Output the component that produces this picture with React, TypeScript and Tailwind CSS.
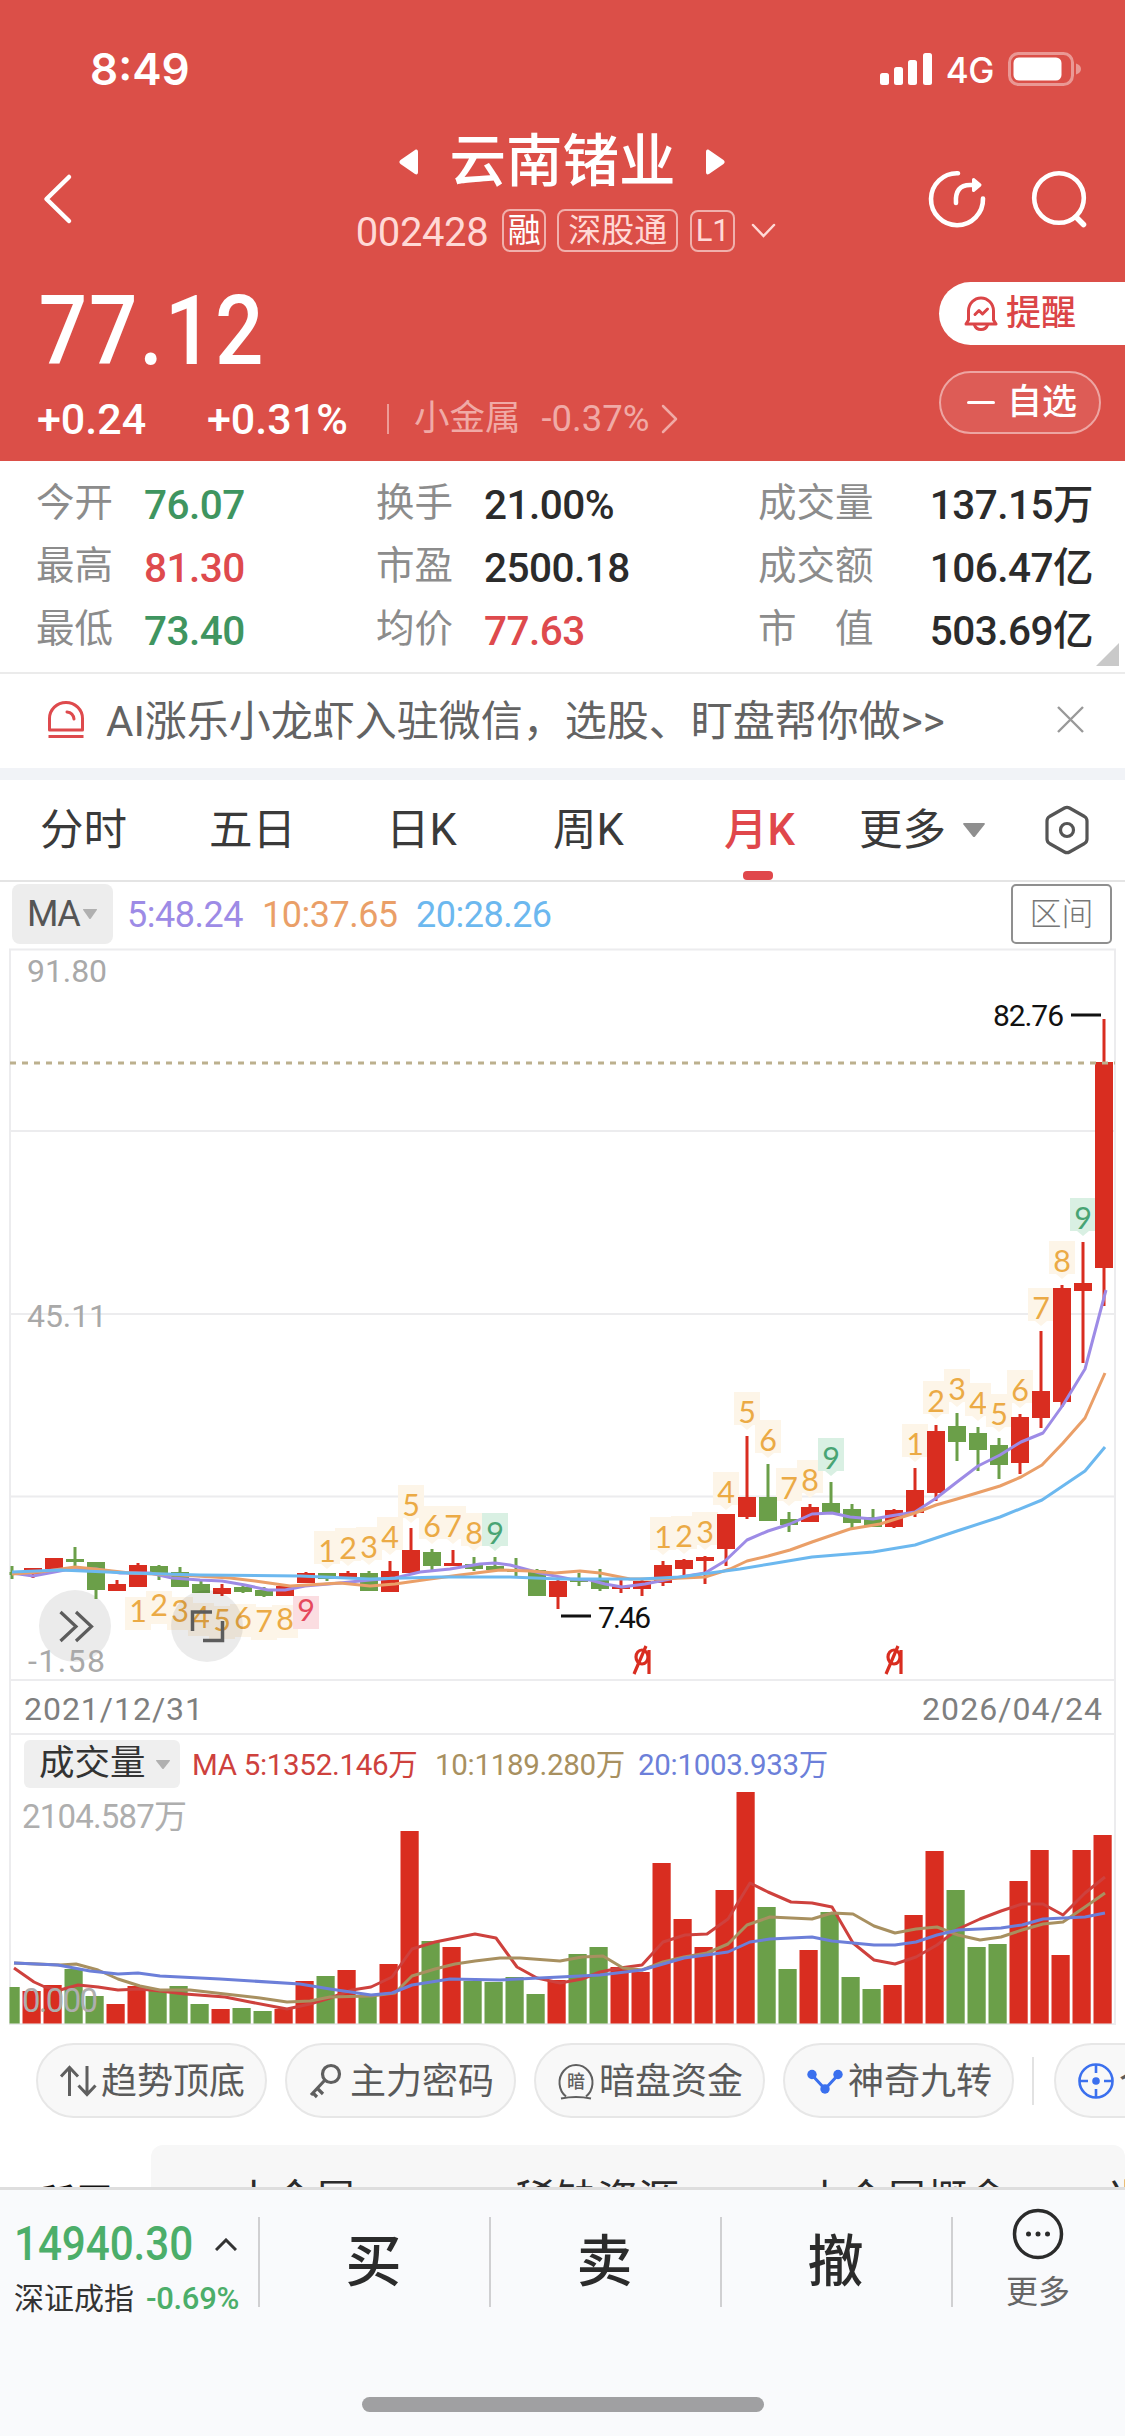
import React from 'react';
import clsx from 'clsx';

const RED = '#d92d20';
const GREEN = '#6b9f49';

// First candle / volume bar centre and distance between neighbours
const CANDLE_X0 = 12;
const VOLUME_X0 = 10.6;
const STEP = 21;

type Direction = 'r' | 'g';

// direction, high, body top, body bottom, low
const candles: [Direction, number, number, number, number][] = [
  ['g', 1566, 1572, 1575, 1579],
  ['r', 1568, 1568, 1574, 1578],
  ['r', 1558, 1558, 1569, 1569],
  ['g', 1547, 1559, 1562, 1566],
  ['g', 1562, 1562, 1590, 1599],
  ['r', 1580, 1584, 1591, 1591],
  ['r', 1563, 1565, 1587, 1587],
  ['g', 1565, 1566, 1575, 1580],
  ['g', 1567, 1572, 1587, 1587],
  ['g', 1581, 1584, 1593, 1593],
  ['r', 1584, 1588, 1594, 1596],
  ['g', 1586, 1587, 1592, 1593],
  ['g', 1587, 1590, 1596, 1597],
  ['r', 1586, 1586, 1596, 1596],
  ['r', 1572, 1573, 1583, 1583],
  ['g', 1573, 1573, 1579, 1581],
  ['r', 1571, 1573, 1578, 1578],
  ['g', 1571, 1573, 1591, 1591],
  ['r', 1561, 1571, 1592, 1592],
  ['r', 1528, 1550, 1573, 1573],
  ['g', 1549, 1552, 1566, 1570],
  ['r', 1550, 1563, 1566, 1566],
  ['g', 1557, 1564, 1569, 1571],
  ['g', 1557, 1566, 1570, 1570],
  ['g', 1558, 1570, 1572, 1576],
  ['g', 1569, 1570, 1596, 1596],
  ['r', 1580, 1581, 1597, 1609],
  ['g', 1573, 1579, 1582, 1586],
  ['g', 1569, 1579, 1589, 1591],
  ['r', 1579, 1586, 1589, 1593],
  ['r', 1580, 1581, 1589, 1596],
  ['r', 1561, 1565, 1583, 1586],
  ['r', 1559, 1560, 1569, 1575],
  ['r', 1556, 1557, 1561, 1584],
  ['r', 1514, 1514, 1549, 1566],
  ['r', 1436, 1497, 1517, 1519],
  ['g', 1464, 1497, 1521, 1521],
  ['g', 1512, 1519, 1525, 1532],
  ['r', 1504, 1507, 1522, 1522],
  ['g', 1482, 1503, 1513, 1513],
  ['g', 1504, 1509, 1523, 1528],
  ['g', 1509, 1517, 1527, 1527],
  ['r', 1509, 1510, 1527, 1528],
  ['r', 1468, 1490, 1513, 1517],
  ['r', 1425, 1431, 1493, 1501],
  ['g', 1413, 1426, 1442, 1461],
  ['g', 1427, 1433, 1450, 1471],
  ['g', 1438, 1445, 1465, 1479],
  ['r', 1414, 1417, 1463, 1474],
  ['r', 1331, 1391, 1418, 1428],
  ['r', 1285, 1288, 1402, 1407],
  ['r', 1242, 1283, 1291, 1363],
  ['r', 1019, 1062, 1268, 1306],
];

// candle index, count, text baseline
const upperMarks: [number, number, number][] = [
  [15, 1, 1562], [16, 2, 1559], [17, 3, 1558], [18, 4, 1548], [19, 5, 1516], [20, 6, 1537], [21, 7, 1537], [22, 8, 1544], [23, 9, 1544],
  [31, 1, 1548], [32, 2, 1547], [33, 3, 1543], [34, 4, 1503], [35, 5, 1423], [36, 6, 1451], [37, 7, 1499], [38, 8, 1491], [39, 9, 1469],
  [43, 1, 1455], [44, 2, 1412], [45, 3, 1400], [46, 4, 1414], [47, 5, 1425], [48, 6, 1401], [49, 7, 1319], [50, 8, 1272], [51, 9, 1229],
];

const lowerMarks: [number, number, number][] = [
  [6, 1, 1622], [7, 2, 1616], [8, 3, 1622], [9, 4, 1628], [10, 5, 1631], [11, 6, 1629], [12, 7, 1632], [13, 8, 1630], [14, 9, 1621],
];

const priceAverages = [
  {
    color: '#9d8be6',
    points: '12,1573 33,1576 65,1570 96,1569 120,1573 150,1573 172,1578 200,1580 222,1581 245,1585 268,1590 285,1590 305,1586 340,1583 370,1580 395,1578 420,1572 450,1569 480,1564 495,1563 510,1565 540,1573 570,1579 590,1580 605,1584 622,1587 645,1584 680,1577 705,1573 725,1561 747,1540 768,1531 790,1524 812,1514 832,1513 850,1517 873,1519 890,1516 915,1512 935,1499 957,1482 978,1466 1000,1455 1021,1442 1043,1433 1063,1405 1085,1369 1106,1290',
  },
  {
    color: '#ea9f68',
    points: '12,1574 40,1572 75,1567 95,1569 130,1573 180,1575 230,1578 255,1581 290,1586 340,1583 370,1586 395,1584 430,1579 460,1575 500,1570 530,1571 555,1573 580,1571 600,1573 630,1579 660,1579 705,1577 730,1569 747,1561 768,1556 790,1550 812,1542 850,1529 880,1524 915,1513 936,1505 957,1499 1000,1486 1021,1477 1042,1465 1063,1443 1085,1418 1105,1373',
  },
  {
    color: '#6cb8ef',
    points: '12,1572 60,1570 130,1573 200,1575 300,1576 370,1579 440,1577 510,1577 560,1579 640,1579 680,1577 740,1569 770,1564 812,1557 873,1552 915,1545 957,1531 1000,1517 1042,1500 1085,1471 1105,1447',
  },
];

const volumes: [Direction, number][] = [
  ['g', 1987], ['r', 1991], ['r', 1985], ['g', 1969], ['g', 1996], ['r', 2004], ['r', 1986], ['g', 1991], ['g', 1986], ['g', 2004], ['r', 2009],
  ['g', 2008], ['g', 2011], ['r', 2009], ['r', 1981], ['g', 1976], ['r', 1970], ['g', 1996], ['r', 1964], ['r', 1831], ['g', 1941], ['r', 1947],
  ['g', 1981], ['g', 1982], ['g', 1977], ['g', 1994], ['r', 1980], ['g', 1954], ['g', 1947], ['r', 1967], ['r', 1972], ['r', 1863], ['r', 1919],
  ['r', 1947], ['r', 1890], ['r', 1792], ['g', 1907], ['g', 1969], ['r', 1950], ['g', 1912], ['g', 1977], ['g', 1989], ['r', 1985], ['r', 1915],
  ['r', 1851], ['g', 1890], ['g', 1947], ['g', 1944], ['r', 1881], ['r', 1850], ['r', 1955], ['r', 1850], ['r', 1835],
];

const volumeAverages = [
  {
    color: '#ce413d',
    points: '14,1968 34,1982 45,1987 60,1990 78,1985 98,1987 118,1990 140,1989 160,1991 185,1994 225,1997 250,2002 287,2009 310,2004 330,1998 352,1990 371,1987 392,1977 412,1949 435,1942 455,1938 475,1934 496,1938 517,1967 537,1978 560,1983 582,1979 600,1972 620,1968 642,1965 663,1942 685,1935 707,1934 728,1919 750,1883 768,1892 791,1902 812,1903 832,1907 853,1943 874,1960 895,1964 916,1957 937,1945 958,1929 980,1919 1001,1911 1022,1904 1043,1904 1063,1915 1085,1893 1105,1877',
  },
  {
    color: '#a89060',
    points: '14,1963 60,1965 76,1964 98,1970 118,1979 140,1986 160,1990 190,1990 225,1994 260,1998 287,2002 310,2001 330,1997 371,1996 395,1993 412,1976 435,1969 455,1964 475,1961 500,1958 520,1958 560,1961 582,1957 603,1956 623,1968 642,1970 663,1962 684,1957 707,1953 728,1944 747,1925 770,1917 812,1919 832,1913 853,1914 874,1926 895,1933 916,1929 937,1927 958,1935 980,1940 1001,1937 1022,1930 1043,1924 1063,1922 1085,1907 1105,1893',
  },
  {
    color: '#6c7fd9',
    points: '14,1963 58,1965 90,1971 118,1974 138,1973 160,1976 220,1979 300,1984 330,1989 371,1995 392,1993 412,1985 450,1979 500,1980 560,1977 600,1975 642,1970 684,1958 728,1952 750,1942 770,1939 812,1937 832,1941 874,1945 895,1945 916,1942 937,1935 958,1930 1001,1928 1022,1925 1043,1919 1085,1917 1105,1913',
  },
];

const stats = [
  [
    { label: '今开', value: '76.07', color: 'text-[#3f9560]' },
    { label: '换手', value: '21.00%', color: 'text-[#2b2b2b]' },
    { label: '成交量', value: '137.15万', color: 'text-[#2b2b2b]' },
  ],
  [
    { label: '最高', value: '81.30', color: 'text-[#de4a4d]' },
    { label: '市盈', value: '2500.18', color: 'text-[#2b2b2b]' },
    { label: '成交额', value: '106.47亿', color: 'text-[#2b2b2b]' },
  ],
  [
    { label: '最低', value: '73.40', color: 'text-[#3f9560]' },
    { label: '均价', value: '77.63', color: 'text-[#de4a4d]' },
    { label: '市　值', value: '503.69亿', color: 'text-[#2b2b2b]' },
  ],
];

const StatusBar = () => (
  <div className="flex h-[138px] items-center justify-between pl-[90px] pr-[43px]">
    <span className="font-['Inter','Roboto',sans-serif] text-[44px] font-semibold leading-none">8:49</span>
    <div className="flex items-center">
      <svg width="54" height="32" viewBox="0 0 54 32" fill="currentColor">
        <rect x="0" y="20" width="9" height="12" rx="2.5" />
        <rect x="14" y="14" width="9" height="18" rx="2.5" />
        <rect x="28" y="7" width="9" height="25" rx="2.5" />
        <rect x="43" y="0" width="9" height="32" rx="2.5" />
      </svg>
      <span className="ml-3 mt-[3px] font-['Inter','Roboto',sans-serif] text-[35px] font-medium leading-none tracking-[-0.5px]">4G</span>
      <svg className="ml-3.5" width="74" height="34" viewBox="0 0 74 34">
        <rect x="1.5" y="1.5" width="63" height="31" rx="9" fill="none" stroke="#fff" strokeOpacity=".42" strokeWidth="3" />
        <rect x="5.500" y="5.500" width="48" height="23" rx="5.500" fill="#fff" />
        <path d="M68 11.500c3.500 1 5 3 5 5.500s-1.500 4.500-5 5.500z" fill="#fff" fillOpacity=".42" />
      </svg>
    </div>
  </div>
);

const ShareIcon = () => (
  <svg width="60" height="60" viewBox="0 0 60 60" fill="none" stroke="currentColor" strokeWidth="4.600" strokeLinecap="round" strokeLinejoin="round">
    <path d="M31 4.200A26 26 0 1 0 56 29.500" />
    <path d="M29 34c-1-12 4-18 14-18h8" />
    <path d="M46.500 10.500l6.500 5.500-6.500 5.500z" fill="currentColor" strokeWidth="3" />
  </svg>
);

const SearchIcon = () => (
  <svg width="60" height="60" viewBox="0 0 60 60" fill="none" stroke="currentColor" strokeWidth="4.600" strokeLinecap="round">
    <circle cx="29" cy="29" r="24.800" />
    <path d="M46 48l7.500 7.500" strokeWidth="5.500" />
  </svg>
);

const Header = () => (
  <div className="h-[461px] shrink-0 bg-[#db4f48] text-white">
    <StatusBar />
    <div className="grid h-[122px] grid-cols-[1fr_auto_1fr]">
      <div className="flex items-center pl-[42px]">
        <svg width="32" height="52" viewBox="0 0 32 52" fill="none" stroke="currentColor" strokeWidth="4.500" strokeLinecap="round" strokeLinejoin="round">
          <path d="M27 4L4.500 26 27 48" />
        </svg>
      </div>
      <div className="flex flex-col items-center">
        <div className="flex h-12 items-center gap-[31px]">
          <svg width="19" height="26" viewBox="0 0 19 26" fill="currentColor"><path d="M16 1c2-1 3 0 3 2v20c0 2-1 3-3 2L1.500 15c-1.500-1-1.500-3 0-4z" /></svg>
          <h1 className="text-[56.500px] font-medium leading-none">云南锗业</h1>
          <svg width="19" height="26" viewBox="0 0 19 26" fill="currentColor"><path d="M3 1C1 0 0 1 0 3v20c0 2 1 3 3 2l14.500-10c1.500-1 1.500-3 0-4z" /></svg>
        </div>
        <div className="mt-[23px] flex h-[43px] items-center pl-[7px] text-[#ffd9d6]">
          <span className="mr-3.5 mt-1 text-[40px] leading-none tracking-[-0.4px]">002428</span>
          <span className="flex h-[43px] w-11 items-center justify-center rounded-[8px] border-2 border-[#f0b0ac] text-[33px] leading-none text-white">融</span>
          <span className="ml-[11px] flex h-[43px] w-[121px] items-center justify-center rounded-[8px] border-2 border-[#f0b0ac] text-[33px] leading-none">深股通</span>
          <span className="ml-3 flex h-[42px] w-[45px] items-center justify-center rounded-[8px] border-2 border-[#f0b0ac] text-[31px] leading-none">L1</span>
          <svg className="ml-4" width="25" height="16" viewBox="0 0 25 16" fill="none" stroke="currentColor" strokeWidth="2.500" strokeLinecap="round"><path d="M2 2l10.500 11L23 2" /></svg>
        </div>
      </div>
      <div className="flex items-center justify-end gap-[43px] pr-[35px]">
        <ShareIcon />
        <SearchIcon />
      </div>
    </div>
    <div className="flex justify-between">
      <div className="pl-[37px]">
        <div className="mt-[31px] flex h-20 w-[260px] origin-left scale-x-[.88] items-center pl-0.5 text-[97px] font-medium leading-none tracking-[2px]">77.12</div>
        <div className="mt-7 flex h-10 items-center text-[43px] font-medium leading-none">
          <span className="w-[170px]">+0.24</span>
          <span className="w-[180px]">+0.31%</span>
          <span className="h-[30px] w-[2px] bg-[#ed9c97]" />
          <span className="ml-[25px] text-[35.500px] font-normal text-[#f0aaa6]">小金属</span>
          <span className="ml-[21px] text-[36.500px] font-normal text-[#f0aaa6]">-0.37%</span>
          <svg className="ml-[11px]" width="18" height="30" viewBox="0 0 18 30" fill="none" stroke="#f0aaa6" strokeWidth="2.500" strokeLinecap="round" strokeLinejoin="round"><path d="M2 2l13 13L2 28" /></svg>
        </div>
      </div>
      <div className="w-[186px] pt-[22px]">
        <button className="flex h-[63px] w-full items-center rounded-l-full bg-white pl-[25px] text-[35px] font-medium leading-none text-[#db4547]">
          <svg width="34" height="36" viewBox="0 0 34 36" fill="none" stroke="currentColor" strokeWidth="3" strokeLinejoin="round" strokeLinecap="round">
            <path d="M4.500 24V15a12.500 13 0 0 1 25 0v9l2.500 4H2z" />
            <path d="M10.500 29c2 6 11 6 13 0" />
            <path d="M11 18.500l4-4 3.500 3.500 5-5" />
          </svg>
          <span className="ml-2">提醒</span>
        </button>
        <button className="mt-[26px] flex h-[63px] w-[162px] items-center rounded-full border-2 border-[#eda5a2] bg-white/8 pl-[26px] text-[35px] font-medium leading-none">
          <span className="h-[3px] w-7 rounded-full bg-white" />
          <span className="ml-3">自选</span>
        </button>
      </div>
    </div>
  </div>
);

const StatGrid = () => (
  <div className="relative h-[213px] shrink-0 border-b-2 border-[#ebebeb] pt-[11px]">
    {stats.map((row, i) => (
      <div key={i} className="flex h-[63px] items-center pl-[36px] pr-8 text-[38.500px] leading-none">
        {row.map((item, j) => (
          <div key={item.label} className={clsx('flex items-center', j === 0 && 'w-[340px]', j === 1 && 'w-[382px]', j === 2 && 'flex-1 justify-between')}>
            <span className={clsx('text-[#8c8c8c]', j < 2 && 'w-[108px]')}>{item.label}</span>
            <span className={clsx('mt-1 text-[40.5px] font-medium tracking-[-0.5px]', item.color)}>{item.value}</span>
          </div>
        ))}
      </div>
    ))}
    <svg className="absolute bottom-[6px] right-[6px]" width="23" height="23" viewBox="0 0 23 23" fill="#c9c9c9"><path d="M23 0v23H0z" /></svg>
  </div>
);

const Banner = () => (
  <div className="flex h-[106px] shrink-0 items-center border-b-[12px] border-[#f1f3f7] box-border">
    <svg className="ml-[47px] mt-[-2px]" width="38" height="38" viewBox="0 0 38 38" fill="none" stroke="#de4a4d" strokeWidth="3">
      <path d="M2.500 29V17.500a16.500 16 0 0 1 33 0V29z" strokeLinejoin="round" />
      <path d="M1.500 35.500h35" />
      <path d="M20 11c4 .5 6.500 3 7 7" strokeLinecap="round" />
    </svg>
    <span className="ml-[21px] mt-[2px] whitespace-nowrap text-[42px] leading-none text-[#636363]">AI涨乐小龙虾入驻微信，选股、盯盘帮你做&gt;&gt;</span>
    <svg className="ml-auto mr-[41px] mt-[-4px]" width="27" height="27" viewBox="0 0 27 27" stroke="#999" strokeWidth="2.400"><path d="M1 1l25 25M26 1L1 26" /></svg>
  </div>
);

const Caret = ({ width, height, color }: { width: number; height: number; color: string }) => (
  <svg width={width} height={height} viewBox="0 0 20 14" preserveAspectRatio="none" fill={color}><path d="M0 1c0-1 1-1 1-1h18s1 0 1 1l-9 12.500q-1 1-2 0z" /></svg>
);

const PeriodTabs = () => (
  <div className="flex h-[102px] shrink-0 items-center border-b-2 border-[#e4e4e4] text-[43.500px] leading-none text-[#3a3a3a]">
    <span className="ml-[40px] mt-[2px] w-[169px]">分时</span>
    <span className="mt-[2px] w-[177px]">五日</span>
    <span className="mt-[2px] w-[167px]">日K</span>
    <span className="mt-[2px] w-[171px]">周K</span>
    <span className="relative flex h-full w-[135px] items-center pt-[2px] font-medium text-[#e0474b]">
      月K
      <i className="absolute bottom-0 left-[19px] h-[9px] w-[30px] rounded-[4px] bg-[#e0474b]" />
    </span>
    <span className="mr-[17px] mt-[2px]">更多</span>
    <Caret width={22} height={14} color="#8f8f8f" />
    <svg className="ml-[59px]" width="46" height="50" viewBox="0 0 46 50" fill="none" stroke="#555" strokeWidth="3.200" strokeLinejoin="round">
      <path d="M20.500 3q2.500-1.400 5 0l15 8.500q2.500 1.500 2.500 4.500v18q0 3-2.500 4.500l-15 8.500q-2.500 1.400-5 0l-15-8.500Q3 37 3 34V16q0-3 2.500-4.500z" />
      <circle cx="23" cy="25" r="6.500" />
    </svg>
  </div>
);

const AverageLegend = () => (
  <div className="flex h-[66px] shrink-0 items-center pl-3 text-[36px] leading-none">
    <button className="mt-[-3px] flex h-[60px] w-[101px] items-center rounded-[8px] bg-[#ededed] pl-[15px] text-[#555]">
      <span className="mr-1 tracking-[-1.500px]">MA</span>
      <Caret width={14} height={10} color="#b0b0b0" />
    </button>
    <span className="ml-3.5 w-[135px] tracking-[-0.5px] text-[#9d8be6]">5:48.24</span>
    <span className="w-[154px] tracking-[-0.5px] text-[#ea9f68]">10:37.65</span>
    <span className="tracking-[-0.5px] text-[#6cb8ef]">20:28.26</span>
    <button className="ml-auto mr-[13px] mt-[-2px] flex h-[60px] w-[101px] items-center justify-center rounded-[5px] border-2 border-[#8f8f8f] text-[32px] font-light text-[#777]">区间</button>
  </div>
);

const CountMark = ({ index, count, y, below }: { index: number; count: number; y: number; below?: boolean }) => {
  const x = CANDLE_X0 + STEP * index;
  const top = below ? y - 25 : y - 31;
  const last = count === 9;
  const bg = !last ? '#fdf5e8' : below ? '#fbdde1' : '#d9f0e3';
  const color = !last ? '#ebaa45' : below ? '#e5485d' : '#48a474';
  return (
    <g>
      <rect x={x - 13} y={top} width="26" height="33" fill={bg} />
      {!below && <path d={`M${x - 6} ${top + 33}l6 5 6-5z`} fill={bg} />}
      <text x={x} y={y} fill={color} textAnchor="middle">{count}</text>
    </g>
  );
};

const DividendMark = ({ x }: { x: number }) => (
  <g fill="none" stroke={RED} strokeWidth="3.200">
    <ellipse cx={x} cy="1657" rx="6" ry="7" />
    <path d={`M${x + 7} 1650v24M${x - 8} 1674L${x + 4} 1646`} />
  </g>
);

const PriceChart = () => (
  <svg className="block shrink-0" width="1125" height="787" viewBox="0 948 1125 787">
    <g stroke="#ececee" strokeWidth="2" fill="none">
      <path d="M10 1735V949.500H1115V1735" />
      <path d="M10 1131H1115M10 1314H1115M10 1496.500H1115M10 1680H1115M10 1734H1115" />
    </g>
    <circle cx="75" cy="1626" r="36" fill="#ebebeb" />
    <g className="font-['Lato','Roboto',sans-serif]" fontSize="30.500">
      {lowerMarks.map(([index, count, y]) => <CountMark key={index} index={index} count={count} y={y} below />)}
      {upperMarks.map(([index, count, y]) => <CountMark key={index} index={index} count={count} y={y} />)}
    </g>
    {candles.map(([dir, high, top, bottom, low], i) => {
      const x = CANDLE_X0 + STEP * i;
      const color = dir === 'r' ? RED : GREEN;
      const left = i === 0 ? 9.5 : x - 9;
      return (
        <g key={i} fill={color}>
          <rect x={x - 1.5} y={high} width="3" height={low - high} />
          <rect x={left} y={top} width={i === 0 ? 5 : 18} height={bottom - top} />
        </g>
      );
    })}
    <path d="M10 1063H1115" stroke="#bcb08e" strokeWidth="3" strokeDasharray="6 6" />
    {priceAverages.map((line) => (
      <polyline key={line.color} points={line.points} fill="none" stroke={line.color} strokeWidth="3" strokeLinejoin="round" />
    ))}
    <g fill="#a9a9a9" fontSize="32">
      <text x="27" y="982" textLength="80">91.80</text>
      <text x="27" y="1327" textLength="80">45.11</text>
      <text x="28" y="1672" textLength="77">-1.58</text>
    </g>
    <g fill="#7f7f7f" fontSize="32">
      <text x="24" y="1720" textLength="179">2021/12/31</text>
      <text x="922" y="1720" textLength="180">2026/04/24</text>
    </g>
    <g fill="#111" fontSize="30">
      <text x="993" y="1026" textLength="71">82.76</text>
      <text x="598" y="1628" textLength="53">7.46</text>
    </g>
    <path d="M1071 1015h30M561 1616h30" stroke="#111" strokeWidth="3" />
    <path d="M60.500 1612l15.500 14.500-15.500 14.500M76 1612l15.500 14.500L76 1641" fill="none" stroke="#5c5c5c" strokeWidth="3.200" />
    <circle cx="207" cy="1626" r="36" fill="#000" fillOpacity=".08" />
    <path d="M212 1612h-19.500v19M203 1640.500h19.500V1621" fill="none" stroke="#5c5c5c" strokeWidth="3.500" />
    <DividendMark x={642} />
    <DividendMark x={894} />
  </svg>
);

const VolumeLegend = () => (
  <div className="flex h-[53px] shrink-0 items-start border-x-2 border-[#ececee] ml-[9px] mr-[9px] pl-[13px] pt-[5px] leading-none">
    <button className="flex h-12 w-[156px] items-center rounded-[6px] bg-[#efefef] pl-[15px] text-[35.5px] text-[#333]">
      <span className="mr-2.5">成交量</span>
      <Caret width={14} height={9} color="#b0b0b0" />
    </button>
    <div className="mt-[11px] flex whitespace-nowrap text-[29.500px] tracking-[-0.3px]">
      <span className="ml-3 w-[243px] text-[#ce413d]">MA 5:1352.146万</span>
      <span className="w-[203px] text-[#a89060]">10:1189.280万</span>
      <span className="text-[#6c7fd9]">20:1003.933万</span>
    </div>
  </div>
);

const VolumeChart = () => (
  <svg className="block shrink-0" width="1125" height="238" viewBox="0 1788 1125 238">
    <path d="M10 1788V2024H1115V1788" fill="none" stroke="#ececee" strokeWidth="2" />
    {volumes.map(([dir, top], i) => {
      const left = Math.max(VOLUME_X0 + STEP * i - 9.1, 9.5);
      const right = VOLUME_X0 + STEP * i + 9.1;
      return <rect key={i} x={left} y={top} width={right - left} height={2023.5 - top} fill={dir === 'r' ? RED : GREEN} />;
    })}
    {volumeAverages.map((line) => (
      <polyline key={line.color} points={line.points} fill="none" stroke={line.color} strokeWidth="3" strokeLinejoin="round" />
    ))}
    <g fill="#aeaeae" fontSize="33">
      <text x="22" y="1828" textLength="165">2104.587万</text>
      <text x="22" y="2012" textLength="76">0.000</text>
    </g>
  </svg>
);

const TrendIcon = () => (
  <svg width="38" height="38" viewBox="0 0 38 38" fill="none" stroke="#5f5f5f" strokeWidth="3">
    <path d="M10.500 34V6M2 14.500l8.500-9 8.500 9M28 4v28M19.500 23.500l8.500 9 8.500-9" />
  </svg>
);

const KeyIcon = () => (
  <svg width="38" height="38" viewBox="0 0 38 38" fill="none" stroke="#5f5f5f" strokeWidth="3.200">
    <circle cx="23" cy="12" r="8.500" />
    <path d="M17 18L3 33M9 26l6 6M5 31l4 4" />
  </svg>
);

const DarkPoolIcon = () => (
  <svg width="38" height="38" viewBox="0 0 38 38" fill="none" stroke="#5f5f5f" strokeWidth="2">
    <path d="M9 34.500a16.500 17.500 0 1 1 20 0" />
    <path d="M4 36.500q15-3 30 0" />
    <text x="19" y="26" textAnchor="middle" fontSize="18" fontWeight="500" fill="#5f5f5f" stroke="none">暗</text>
  </svg>
);

const NineTurnIcon = () => (
  <svg width="38" height="38" viewBox="0 0 38 38" fill="#3b70ee" stroke="#3b70ee" strokeWidth="3">
    <path d="M6 13l13 14L32 13" fill="none" />
    <g stroke="none">
      <circle cx="6" cy="12.500" r="4.700" />
      <circle cx="32" cy="12.500" r="4.700" />
      <circle cx="19" cy="27" r="4.700" />
    </g>
  </svg>
);

const TargetIcon = () => (
  <svg width="38" height="38" viewBox="0 0 38 38" fill="none" stroke="#3b70ee" strokeWidth="2.600">
    <circle cx="19" cy="19" r="16.500" />
    <path d="M19 2v9M19 27v9M2 19h9M27 19h9" />
    <circle cx="19" cy="19" r="3.800" fill="#3b70ee" stroke="none" />
  </svg>
);

const tools = [
  { name: '趋势顶底', icon: <TrendIcon /> },
  { name: '主力密码', icon: <KeyIcon /> },
  { name: '暗盘资金', icon: <DarkPoolIcon /> },
  { name: '神奇九转', icon: <NineTurnIcon /> },
];

const chipClass = 'flex h-[75px] shrink-0 items-center rounded-full border-2 border-[#e7e7e7] bg-[#f8f8f8] pl-[21px] text-[36px] leading-none text-[#5a5a5a]';

const ToolChips = () => (
  <div className="mt-[17px] flex shrink-0 items-center overflow-hidden pl-9">
    {tools.map((tool) => (
      <button key={tool.name} className={clsx(chipClass, 'mr-[18px] w-[231px]')}>
        {tool.icon}
        <span className="ml-1 mt-0.5 whitespace-nowrap">{tool.name}</span>
      </button>
    ))}
    <span className="mr-5 h-12 w-[2px] shrink-0 bg-[#e2e2e2]" />
    <button className={clsx(chipClass, 'w-[231px]')}>
      <TargetIcon />
      <span className="ml-1 mt-0.5 whitespace-nowrap">个股诊断</span>
    </button>
  </div>
);

const SectorRow = () => (
  <div className="flex h-[69px] shrink-0 items-start overflow-hidden pt-[27px]">
    <span className="mt-[39px] w-[151px] shrink-0 pl-[37px] text-[38px] font-bold leading-none text-[#111]">所属</span>
    <div className="flex h-24 w-[974px] shrink-0 items-start overflow-hidden whitespace-nowrap rounded-[12px] bg-[#f7f7f7] pt-[35px] text-[41px] leading-none text-[#2b2b2b]">
      <span className="ml-[82px] w-[282px] shrink-0">小金属</span>
      <span className="w-[289px] shrink-0">稀缺资源</span>
      <span className="w-[302px] shrink-0">小金属概念</span>
      <span className="shrink-0">半导体</span>
    </div>
  </div>
);

const BottomBar = () => (
  <div className="flex h-[249px] shrink-0 flex-col items-center border-t-[3px] border-[#dedede] bg-[#f9fafc]">
    <div className="flex h-[144px] w-full items-center">
      <div className="w-[258px] pl-3.5 pt-2.5 leading-none">
        <div className="flex items-center">
          <span className="w-[187px] origin-left scale-x-[.88] text-[48px] font-medium tracking-[-0.1px] text-[#4cae6a]">14940.30</span>
          <svg className="ml-3.5" width="22" height="13" viewBox="0 0 22 13" fill="none" stroke="#333" strokeWidth="3"><path d="M1 12L11 2l10 10" /></svg>
        </div>
        <div className="mt-[15px] flex items-center text-[30px] text-[#333]">
          深证成指
          <span className="ml-3 text-[31px] font-medium tracking-[-0.3px] text-[#4cae6a]">-0.69%</span>
        </div>
      </div>
      {['买', '卖', '撤'].map((label) => (
        <div key={label} className="flex h-[90px] w-[231px] items-center justify-center border-l-2 border-[#d0d0d2] pr-[2px] text-[56px] font-medium leading-none text-[#2b2b2b]">
          {label}
        </div>
      ))}
      <div className="flex h-[90px] flex-1 items-center justify-center border-l-2 border-[#d0d0d2]">
        <div className="mt-[-9px] flex flex-col items-center pr-[2px] text-[32px] leading-none text-[#666]">
          <svg width="52" height="52" viewBox="0 0 52 52" fill="#2b2b2b">
            <circle cx="26" cy="26" r="23.500" fill="none" stroke="#2b2b2b" strokeWidth="3.500" />
            <circle cx="16.500" cy="26" r="2.500" />
            <circle cx="26" cy="26" r="2.500" />
            <circle cx="35.500" cy="26" r="2.500" />
          </svg>
          <span className="mt-4">更多</span>
        </div>
      </div>
    </div>
    <div className="mt-[63px] h-[15px] w-[402px] rounded-full bg-[#a0a0a2]" />
  </div>
);

const App: React.FC = () => (
  <div className="flex h-[2436px] w-[1125px] flex-col overflow-hidden bg-white font-['Roboto','Noto_Sans_CJK_SC',sans-serif]">
    <Header />
    <StatGrid />
    <Banner />
    <PeriodTabs />
    <AverageLegend />
    <PriceChart />
    <VolumeLegend />
    <VolumeChart />
    <ToolChips />
    <SectorRow />
    <BottomBar />
  </div>
);

export default App;
